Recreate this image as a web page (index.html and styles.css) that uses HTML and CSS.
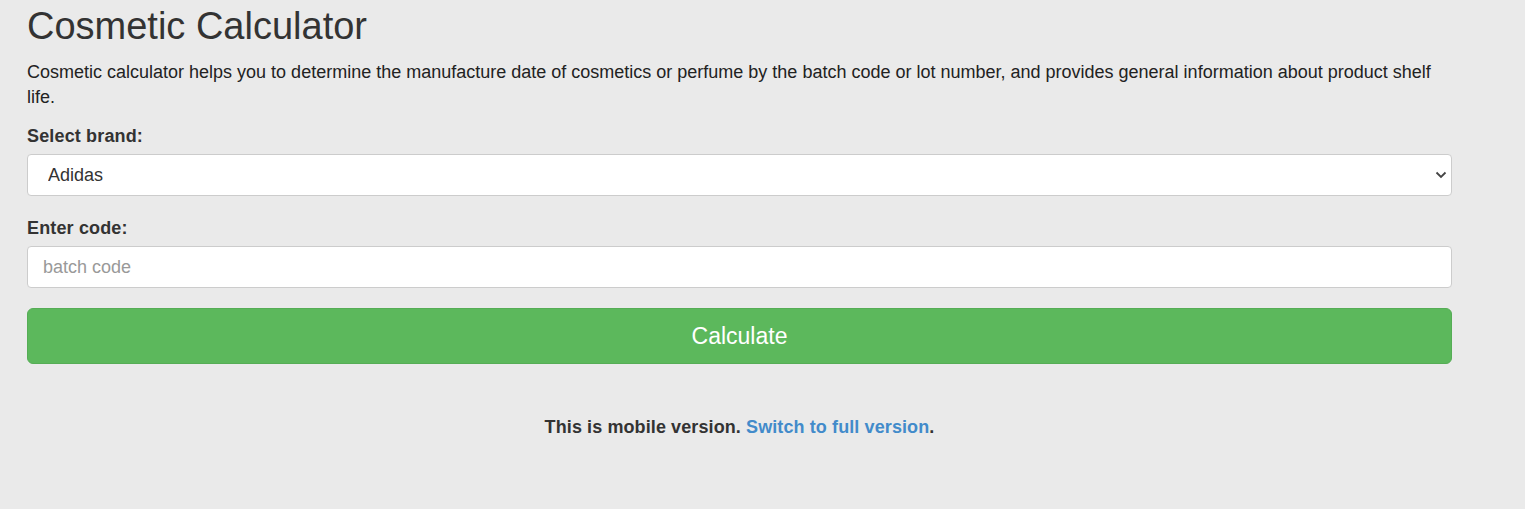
FILE: index.html
```html
<!DOCTYPE html>
<html>
<head>
<meta charset="utf-8">
<title>Cosmetic Calculator</title>
<link rel="stylesheet" href="styles.css">
</head>
<body>
<div class="page">
  <h1 class="title">Cosmetic Calculator</h1>
  <p class="intro">Cosmetic calculator helps you to determine the manufacture date of cosmetics or perfume by the batch code or lot number, and provides general information about product shelf life.</p>
  <form class="calc">
    <label class="label" for="brand">Select brand:</label>
    <div class="select-wrap">
      <select id="brand" class="field select">
        <option>Adidas</option>
      </select>
      <svg class="chev" width="12" height="8" viewBox="0 0 12 8"><path d="M1.5 1.5 L6 6 L10.5 1.5" fill="none" stroke="#444" stroke-width="1.8"/></svg>
    </div>
    <label class="label label-code" for="code">Enter code:</label>
    <input id="code" class="field input" type="text" placeholder="batch code">
    <button type="button" class="btn">Calculate</button>
  </form>
  <p class="footer">This is mobile version. <a href="#" class="link">Switch to full version</a>.</p>
</div>
</body>
</html>
```
FILE: styles.css
```css
html, body {
  margin: 0;
  padding: 0;
  background: #eaeaea;
}
body {
  font-family: "Liberation Sans", Arial, sans-serif;
  color: #333;
  font-size: 18px;
}
.page {
  width: 1425px;
  padding: 5px 0 0 27px;
}
.title {
  margin: 0;
  font-size: 38px;
  font-weight: normal;
  line-height: 42px;
  color: #333;
}
.intro {
  margin: 13px 0 0 0;
  font-size: 18px;
  line-height: 25px;
  color: #222;
}
.calc {
  display: flex;
  flex-direction: column;
  margin-top: 15px;
}
.label {
  font-weight: bold;
  font-size: 18px;
  line-height: 22px;
  letter-spacing: 0.15px;
  margin-bottom: 7px;
  color: #333;
}
.field {
  box-sizing: border-box;
  width: 100%;
  background: #fff;
  border: 1px solid #ccc;
  border-radius: 4px;
  font-family: "Liberation Sans", Arial, sans-serif;
  font-size: 18px;
  color: #333;
  outline: none;
}
.select-wrap {
  position: relative;
  margin-bottom: 21px;
}
.select {
  display: block;
  height: 42px;
  padding: 0 20px;
  appearance: none;
  -webkit-appearance: none;
}
.chev {
  position: absolute;
  right: 5px;
  top: 17px;
  pointer-events: none;
}
.input {
  height: 42px;
  padding: 0 15px;
}
.input::placeholder {
  color: #999;
}
.btn {
  margin-top: 20px;
  height: 56px;
  background: #5cb85c;
  border: 1px solid #56ad56;
  border-radius: 6px;
  color: #fff;
  font-family: "Liberation Sans", Arial, sans-serif;
  font-size: 23px;
}
.footer {
  margin: 52px 0 0 0;
  text-align: center;
  font-weight: bold;
  font-size: 18px;
  line-height: 22px;
  letter-spacing: 0.1px;
  color: #333;
}
.link {
  color: #428bca;
  text-decoration: none;
}
```
